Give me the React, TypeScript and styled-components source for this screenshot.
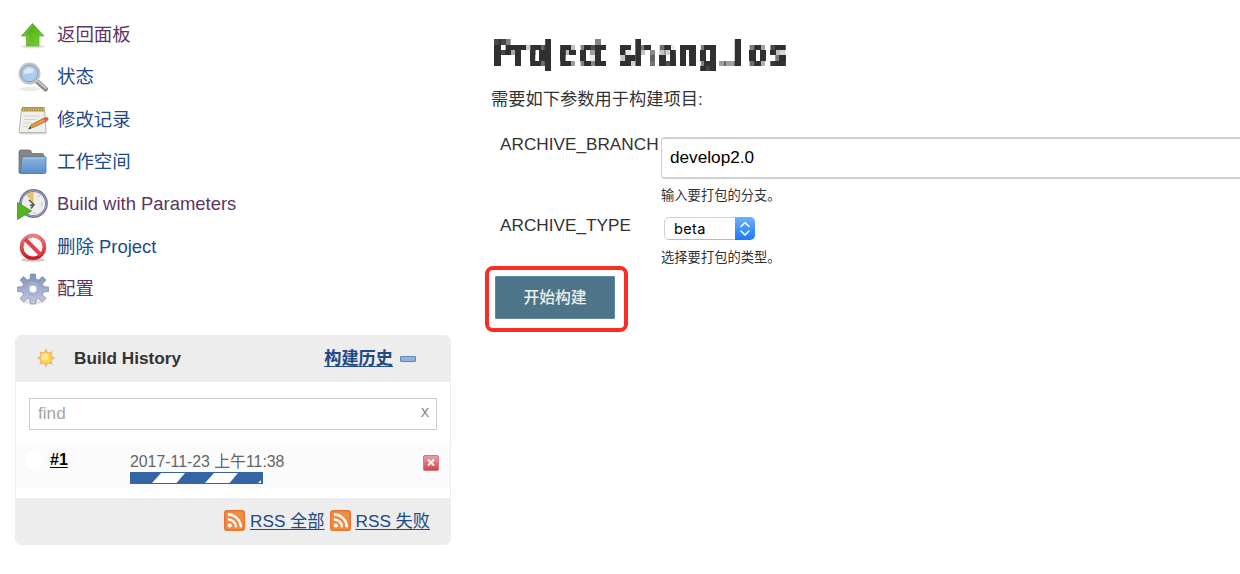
import React from "react";
import styled, { createGlobalStyle } from "styled-components";

const GlobalStyle = createGlobalStyle`
  * { box-sizing: border-box; }
  body {
    margin: 0;
    background: #fff;
    color: #333;
    font-family: "Liberation Sans", "Noto Sans CJK SC", sans-serif;
    font-size: 17.2px;
    line-height: 22px;
    overflow: hidden;
  }
`;

const Page = styled.div`
  display: flex;
  width: 1240px;
  height: 574px;
  overflow: hidden;
`;

const Sidebar = styled.aside`
  flex: none;
  width: 451px;
  padding: 14px 0 0 15px;
`;

const Tasks = styled.nav`
  display: flex;
  flex-direction: column;
`;

const Task = styled.a<{ $visited?: boolean }>`
  display: flex;
  align-items: center;
  gap: 8px;
  height: 42.3px;
  padding-left: 2px;
  font-size: 18.45px;
  color: ${(p) => (p.$visited ? "#5c3566" : "#204a87")};
  svg { flex: none; display: block; }
`;

const Panel = styled.section`
  margin-top: 24.9px;
  height: 210px;
  display: flex;
  flex-direction: column;
  border: 1px solid #eee;
  border-radius: 6px;
  overflow: hidden;
`;

const PanelHeader = styled.header`
  flex: none;
  display: flex;
  align-items: center;
  height: 46px;
  padding: 0 34px 2px 20px;
  background: #ededed;
  font-weight: 700;
`;

const PanelTitle = styled.span`
  flex: 1;
  margin-left: 18px;
`;

const Link = styled.a`
  color: #204a87;
  text-decoration: underline;
  text-underline-offset: 2px;
  text-decoration-thickness: 1px;
`;

const Collapse = styled.span`
  width: 16px;
  height: 6px;
  margin: 3px 0 0 7px;
  border: 1px solid #5f88bd;
  border-radius: 1px;
  background: #93b2db;
`;

const Search = styled.div`
  flex: none;
  display: flex;
  justify-content: space-between;
  align-items: center;
  height: 32px;
  margin: 16px 13px 13px;
  padding: 0 7px 2px 8px;
  border: 1px solid #ccc;
  color: #a5a5a5;
`;

const Clear = styled.span`
  font-family: "Open Sans", sans-serif;
  font-size: 16px;
  color: #888;
  margin-top: -4px;
`;

const BuildRow = styled.div`
  flex: none;
  display: flex;
  height: 45px;
  padding: 8px 11px 0 10px;
  background: #fbfbfb;
`;

const Ball = styled.span`
  width: 18px;
  height: 18px;
  border-radius: 50%;
  background: #fff;
`;

const BuildNumber = styled.a`
  width: 80px;
  margin-left: 6px;
  font-size: 16px;
  line-height: 17px;
  font-weight: 700;
  color: #000;
  text-decoration: underline;
  text-underline-offset: 2px;
`;

const BuildInfo = styled.div`
  flex: 1;
  font-size: 15.85px;
  line-height: 21px;
  color: #666;
  svg { display: block; }
`;

const Cancel = styled.div`
  padding-top: 3px;
`;

const PanelFooter = styled.footer`
  flex: 1;
  display: flex;
  align-items: center;
  justify-content: flex-end;
  gap: 5px;
  margin-top: 10px;
  padding: 0 20px 0 0;
  background: #ededed;
`;

const Main = styled.main`
  flex: none;
  width: 789px;
  padding: 32px 0 0 40px;
`;

const Title = styled.h1`
  margin: 0;
  width: 320px;
  height: 46px;
  transform: scaleX(0.99);
  transform-origin: 4px 0;
  svg { display: block; overflow: visible; }
  text {
    font-size: 35.5px;
    font-weight: 700;
    fill: #303030;
  }
`;

const Intro = styled.p`
  margin: 10px 0 0;
  font-size: 17.25px;
  line-height: 22px;
`;

const Field = styled.div<{ $top: number; $height: number }>`
  display: flex;
  margin-top: ${(p) => p.$top}px;
  height: ${(p) => p.$height}px;
`;

const Label = styled.label`
  flex: none;
  width: 170px;
  padding-left: 9px;
`;

const Control = styled.div`
  flex: 1;
  min-width: 0;
`;

const TextBox = styled.div`
  width: 620px;
  height: 42px;
  margin-top: 4px;
  padding: 7px 8px;
  border: 1px solid #d0d0d0;
  border-width: 2px 1px;
  border-radius: 4px;
  color: #000;
`;

const Hint = styled.div<{ $top: number }>`
  margin-top: ${(p) => p.$top}px;
  font-size: 13.3px;
  line-height: 18px;
`;

const Select = styled.div`
  display: flex;
  justify-content: space-between;
  width: 91px;
  height: 23px;
  margin: 3px 0 0 3px;
  padding-left: 9px;
  border: 1px solid #d2d2d2;
  border-bottom-color: #bbb;
  border-radius: 5px;
  font-family: Inter, sans-serif;
  font-size: 14.6px;
  letter-spacing: 0.3px;
  line-height: 22px;
  color: #000;
`;

const Stepper = styled.span`
  width: 20px;
  height: 23px;
  margin: -1px;
  border-radius: 0 5px 5px 0;
  background: linear-gradient(#6bb1fa, #1a7bfb);
  svg { display: block; }
`;

const Submit = styled.button`
  position: relative;
  display: block;
  width: 120px;
  height: 43px;
  margin: 9px 0 0 4px;
  padding: 0;
  border: 1px solid #5b87a0;
  border-radius: 1px;
  background: #4d7489;
  color: #eee;
  font: 500 15.8px/41px "Liberation Sans", "Noto Sans CJK SC", sans-serif;
`;

const Highlight = styled.span`
  position: absolute;
  inset: -11px -14px -14px -11px;
  border: 4px solid #fb2d20;
  border-radius: 8px;
`;

const stops = (a: string, b: string) => (
  <>
    <stop offset="0" stopColor={a} />
    <stop offset="1" stopColor={b} />
  </>
);

/* Breaks the title into blocks: three samples per 16px tile, each grown to a
   5px block; the one pixel left over in a tile is filled from its neighbour. */
const SAMPLES = [2, 8, 13];
const MosaicFilter = () => (
  <filter id="mosaic" filterUnits="userSpaceOnUse" x="0" y="0" width="320" height="46" colorInterpolationFilters="sRGB">
    {SAMPLES.map((s) => (
      <feFlood key={s} x={4 + s} y="7" width="1" height="16" floodColor="#000" result={`c${s}`} />
    ))}
    <feMerge x="4" y="7" width="16" height="16" result="cols">
      {SAMPLES.map((s) => <feMergeNode key={s} in={`c${s}`} />)}
    </feMerge>
    {SAMPLES.map((s) => (
      <feFlood key={s} x="4" y={7 + s} width="16" height="1" floodColor="#000" result={`r${s}`} />
    ))}
    <feMerge x="4" y="7" width="16" height="16" result="rows">
      {SAMPLES.map((s) => <feMergeNode key={s} in={`r${s}`} />)}
    </feMerge>
    <feComposite in="cols" in2="rows" operator="in" x="4" y="7" width="16" height="16" result="dots" />
    <feTile in="dots" result="grid" />
    <feFlood x="9" y="7" width="1" height="16" floodColor="#000" result="gapX" />
    <feMerge x="4" y="7" width="16" height="16" result="gapXTile"><feMergeNode in="gapX" /></feMerge>
    <feTile in="gapXTile" result="gapsX" />
    <feFlood x="4" y="12" width="16" height="1" floodColor="#000" result="gapY" />
    <feMerge x="4" y="7" width="16" height="16" result="gapYTile"><feMergeNode in="gapY" /></feMerge>
    <feTile in="gapYTile" result="gapsY" />
    <feGaussianBlur in="SourceGraphic" stdDeviation="0.8" result="soft" />
    <feComponentTransfer in="soft" result="sharp">
      <feFuncA type="linear" slope="1.7" intercept="-0.25" />
    </feComponentTransfer>
    <feComposite in="sharp" in2="grid" operator="in" result="samples" />
    <feMorphology in="samples" operator="dilate" radius="2" result="blocks" />
    <feOffset in="blocks" dx="1" dy="0" result="right" />
    <feComposite in="right" in2="gapsX" operator="in" result="fillX" />
    <feMerge result="wide">
      <feMergeNode in="blocks" />
      <feMergeNode in="fillX" />
    </feMerge>
    <feOffset in="wide" dx="0" dy="1" result="down" />
    <feComposite in="down" in2="gapsY" operator="in" result="fillY" />
    <feMerge>
      <feMergeNode in="wide" />
      <feMergeNode in="fillY" />
    </feMerge>
  </filter>
);

/* Each letter: mosaic column of its left stem, stem centre in em, nudge in px. */
const LETTERS: [string, number, number, number][] = [
  ["P", 0, 0.14, -0.8],
  ["r", 4, 0.135, 0],
  ["o", 6, 0.11, 1.5],
  ["j", 10, 0.14, -1],
  ["e", 12, 0.11, 0],
  ["c", 16, 0.11, 0],
  ["t", 19, 0.16, 0],
  [" ", 21, 0, 0],
  ["s", 23, 0.1, 0.6],
  ["h", 27, 0.135, -0.8],
  ["a", 31, 0.1, 0],
  ["n", 35, 0.135, 0],
  ["g", 39, 0.11, -0.5],
  ["_", 42, 0, 0.5],
  ["l", 46, 0.14, -1.5],
  ["o", 48, 0.11, 0],
  ["s", 52, 0.1, 0],
];
const SQUEEZE = 0.9;
const letterX = LETTERS.map(([, col, stem, nudge]) =>
  ((4 + (col * 16) / 3 + 2.67 + nudge) / SQUEEZE - stem * 35.5).toFixed(2)
).join(" ");
const letterY = LETTERS.map(([ch]) => (ch === "_" ? 28.3 : 33)).join(" ");

const MosaicTitle = () => (
  <svg width="320" height="46" viewBox="0 0 320 46">
    <MosaicFilter />
    <g filter="url(#mosaic)">
      <text x={letterX} y={letterY} transform={`scale(${SQUEEZE} 1)`} xmlSpace="preserve">
        {LETTERS.map(([ch]) => ch).join("")}
      </text>
    </g>
  </svg>
);

const Icon = ({ children }: { children: React.ReactNode }) => (
  <svg width="32" height="32" viewBox="0 0 32 32">{children}</svg>
);

const UpIcon = () => (
  <Icon>
    <defs><linearGradient id="up" x1="0" y1="0" x2="1" y2="1">{stops("#4c9a18", "#79d930")}</linearGradient></defs>
    <ellipse cx="16" cy="27.5" rx="12" ry="1.8" fill="#000" opacity=".12" />
    <path d="M15.500 4.500 27 17H22V27H9.500V17H4.500Z" fill="url(#up)" stroke="#5aae2a" strokeWidth=".8" strokeLinejoin="round" />
    <path d="M15.500 6.500 7 16h4v9" fill="none" stroke="#9be05f" opacity=".5" />
  </Icon>
);

const SearchIcon = () => (
  <Icon>
    <ellipse cx="13" cy="28" rx="11" ry="2.200" fill="#000" opacity=".08" />
    <path d="M19 19.500 28.500 28" stroke="#8c8c8c" strokeWidth="5" strokeLinecap="round" />
    <path d="M20 19.500 28.500 27" stroke="#c4c4c4" strokeWidth="2" strokeLinecap="round" />
    <circle cx="12.500" cy="12.500" r="9.700" fill="#b5d2f1" stroke="#c4c4c4" strokeWidth="2.600" />
    <circle cx="12.500" cy="12.500" r="8.300" fill="#aecbed" stroke="#7b9fcc" strokeWidth="1" />
    <path d="M6.500 12.500a6 6 0 0 1 11-3q-3 4-11 3z" fill="#e4f0fc" opacity=".8" />
  </Icon>
);

const NotesIcon = () => (
  <Icon>
    <path d="M2 29h28l-2 1.500H4z" fill="#000" opacity=".15" />
    <path d="M4.500 5h23l1.500 23.500H2z" fill="#efefed" stroke="#b4b4b0" />
    <path d="M5 3h22.500v4.500H4.700z" fill="#a89749" />
    <path d="M6 5.500h21" stroke="#dac873" strokeWidth="2" strokeDasharray="1 1.500" />
    <path d="M7 12h16M7 15.500h12M6 19h9M6 22.500h5" stroke="#d2d2d0" />
    <path d="m12 25 2-4 13-7 3 3-13 6z" fill="#e59a3f" stroke="#a5662a" strokeWidth=".8" />
    <path d="m26 14.500 3-1.500q2.500 0 2.500 3L29 17.500z" fill="#dc5a55" />
    <path d="m11 25.500 3-1.500-1-1.500z" fill="#333" />
  </Icon>
);

const FolderIcon = () => (
  <Icon>
    <defs><linearGradient id="folder" x1="0" y1="0" x2="0" y2="1">{stops("#8bb5de", "#5b8fca")}</linearGradient></defs>
    <path d="M2 27V6q0-2 2-2h8q2 0 2.500 2l.5 1.500h10q2 0 2 2V27z" fill="#858585" stroke="#6d6d6d" strokeWidth=".8" />
    <path d="M5 11h24v15q0 1.500-1.500 1.500h-24z" fill="url(#folder)" stroke="#4777ad" strokeWidth=".8" />
    <path d="M6 12h22" stroke="#b4d2ee" />
  </Icon>
);

const ClockIcon = () => (
  <Icon>
    <circle cx="16.500" cy="15.500" r="13" fill="#eeeeec" stroke="#77779a" strokeWidth="2.800" />
    <circle cx="16.500" cy="15.500" r="12.800" fill="none" stroke="#a2a2bc" strokeWidth="1" />
    <path d="M16.500 15.500 9.500 7q3-3 7-3z" fill="#e5c55d" />
    <path d="m12 12 5 4.500-3 4M17 16.500l-4 1" fill="none" stroke="#555753" strokeWidth="1.600" />
    <path d="M25 14v4M16 25h3M22 7l-1 2" stroke="#bbb" />
    <path d="M.5 14.500 14.500 23 .5 31.500z" fill="#55b51f" stroke="#3e8f12" strokeWidth=".8" />
  </Icon>
);

const StopIcon = () => (
  <Icon>
    <defs><linearGradient id="stop" x1="0" y1="0" x2="0" y2="1">{stops("#ea8080", "#cc1a24")}</linearGradient></defs>
    <ellipse cx="16" cy="29" rx="12" ry="1.800" fill="#000" opacity=".2" />
    <circle cx="16" cy="16" r="11.300" fill="#fafafa" stroke="url(#stop)" strokeWidth="3.600" />
    <path d="m8.200 8.200 15.600 15.600" stroke="#dd444a" strokeWidth="4" />
    <circle cx="16" cy="16" r="13" fill="none" stroke="#d2474b" strokeWidth=".5" />
  </Icon>
);

const GearIcon = () => (
  <Icon>
    <defs><linearGradient id="gear" x1="0" y1="0" x2="0" y2="1">{stops("#7d93b9", "#c6c8e0")}</linearGradient></defs>
    <ellipse cx="16" cy="29" rx="11" ry="2.200" fill="#000" opacity=".1" />
    <path
      d="M13.500 1h5l.5 5 2.500 1 4-3.500 3.500 3.500-3.500 4 1 2.500 5 .5v4.500l-5 .5-1 2.500 3.500 4-3.500 3.500-4-3.500-2.500 1-.5 4.500h-5l-.5-4.500-2.500-1-4 3.500L3 25.500l3.500-4-1-2.500-5-.5V14l5-.5 1-2.500L3 7l3.500-3.500 4 3.500 2.500-1z"
      fill="url(#gear)"
      stroke="#8087a5"
      strokeWidth=".7"
    />
    <circle cx="16" cy="16" r="6" fill="none" stroke="#a9b1cf" strokeWidth="2" />
    <circle cx="16" cy="16" r="4" fill="#fff" stroke="#8f96b5" strokeWidth=".6" />
  </Icon>
);

const SunIcon = () => (
  <svg width="20" height="20" viewBox="0 0 20 20">
    <g fill="#f5b268">
      {[0, 45, 90, 135, 180, 225, 270, 315].map((a) => (
        <path key={a} d="m10 .5 2.400 5H7.600z" transform={`rotate(${a} 10 10)`} />
      ))}
    </g>
    <circle cx="10" cy="10" r="6" fill="#fbd651" stroke="#f6b35c" />
    <circle cx="9" cy="9" r="3.600" fill="#fdeea0" opacity=".8" />
  </svg>
);

const RssIcon = () => (
  <svg width="21" height="21" viewBox="0 0 21 21">
    <defs><linearGradient id="rss" x1="0" y1="0" x2="1" y2="1">{stops("#e5763a", "#e8742e")}</linearGradient></defs>
    <rect width="21" height="21" rx="3" fill="url(#rss)" />
    <rect x="1.500" y="1.500" width="18" height="18" rx="2" fill="#f4964a" opacity=".75" />
    <circle cx="5.800" cy="15.500" r="2" fill="#fff" />
    <path d="M4 9.300a8 8 0 0 1 8 8M4 4.500a12.800 12.800 0 0 1 12.800 12.800" fill="none" stroke="#fff" strokeWidth="2.300" />
  </svg>
);

const CancelIcon = () => (
  <svg width="16" height="16" viewBox="0 0 16 16">
    <defs><linearGradient id="cancel" x1="0" y1="0" x2="0" y2="1">{stops("#e5a3a7", "#d43f4d")}</linearGradient></defs>
    <rect x=".5" y=".5" width="15" height="15" rx="1.500" fill="url(#cancel)" stroke="#d5767d" />
    <path d="m5 4.500 6 6m0-6-6 6" stroke="#fff" strokeWidth="2.200" opacity=".9" />
  </svg>
);

const Progress = () => (
  <svg width="133" height="12" viewBox="0 0 133 12">
    <rect width="133" height="12" fill="#3465a4" />
    <path d="M31 1H55l-8.500 10H22zM84 1H108l-8.500 10H75zM131 8v3h-3z" fill="#fff" />
  </svg>
);

const TASKS = [
  { label: "返回面板", icon: UpIcon, visited: true },
  { label: "状态", icon: SearchIcon },
  { label: "修改记录", icon: NotesIcon },
  { label: "工作空间", icon: FolderIcon },
  { label: "Build with Parameters", icon: ClockIcon, visited: true },
  { label: "删除 Project", icon: StopIcon },
  { label: "配置", icon: GearIcon, visited: true },
];

export default function App() {
  return (
    <Page>
      <GlobalStyle />
      <Sidebar>
        <Tasks>
          {TASKS.map(({ label, icon: TaskIcon, visited }) => (
            <Task key={label} $visited={visited}>
              <TaskIcon />
              {label}
            </Task>
          ))}
        </Tasks>
        <Panel>
          <PanelHeader>
            <SunIcon />
            <PanelTitle>Build History</PanelTitle>
            <Link>构建历史</Link>
            <Collapse />
          </PanelHeader>
          <Search>
            find
            <Clear>x</Clear>
          </Search>
          <BuildRow>
            <Ball />
            <BuildNumber>#1</BuildNumber>
            <BuildInfo>
              2017-11-23 上午11:38
              <Progress />
            </BuildInfo>
            <Cancel><CancelIcon /></Cancel>
          </BuildRow>
          <PanelFooter>
            <RssIcon />
            <Link>RSS 全部</Link>
            <RssIcon />
            <Link>RSS 失败</Link>
          </PanelFooter>
        </Panel>
      </Sidebar>
      <Main>
        <Title><MosaicTitle /></Title>
        <Intro>需要如下参数用于构建项目:</Intro>
        <Field $top={23} $height={81}>
          <Label>ARCHIVE_BRANCH</Label>
          <Control>
            <TextBox>develop2.0</TextBox>
            <Hint $top={8}>输入要打包的分支。</Hint>
          </Control>
        </Field>
        <Field $top={0} $height={53}>
          <Label>ARCHIVE_TYPE</Label>
          <Control>
            <Select>
              beta
              <Stepper>
                <svg width="20" height="23" viewBox="0 0 20 23">
                  <path d="m6 9.500 4-4 4 4M6 14l4 4 4-4" fill="none" stroke="#fff" strokeWidth="1.600" strokeLinecap="round" strokeLinejoin="round" />
                </svg>
              </Stepper>
            </Select>
            <Hint $top={9}>选择要打包的类型。</Hint>
          </Control>
        </Field>
        <Submit>
          开始构建
          <Highlight />
        </Submit>
      </Main>
    </Page>
  );
}
